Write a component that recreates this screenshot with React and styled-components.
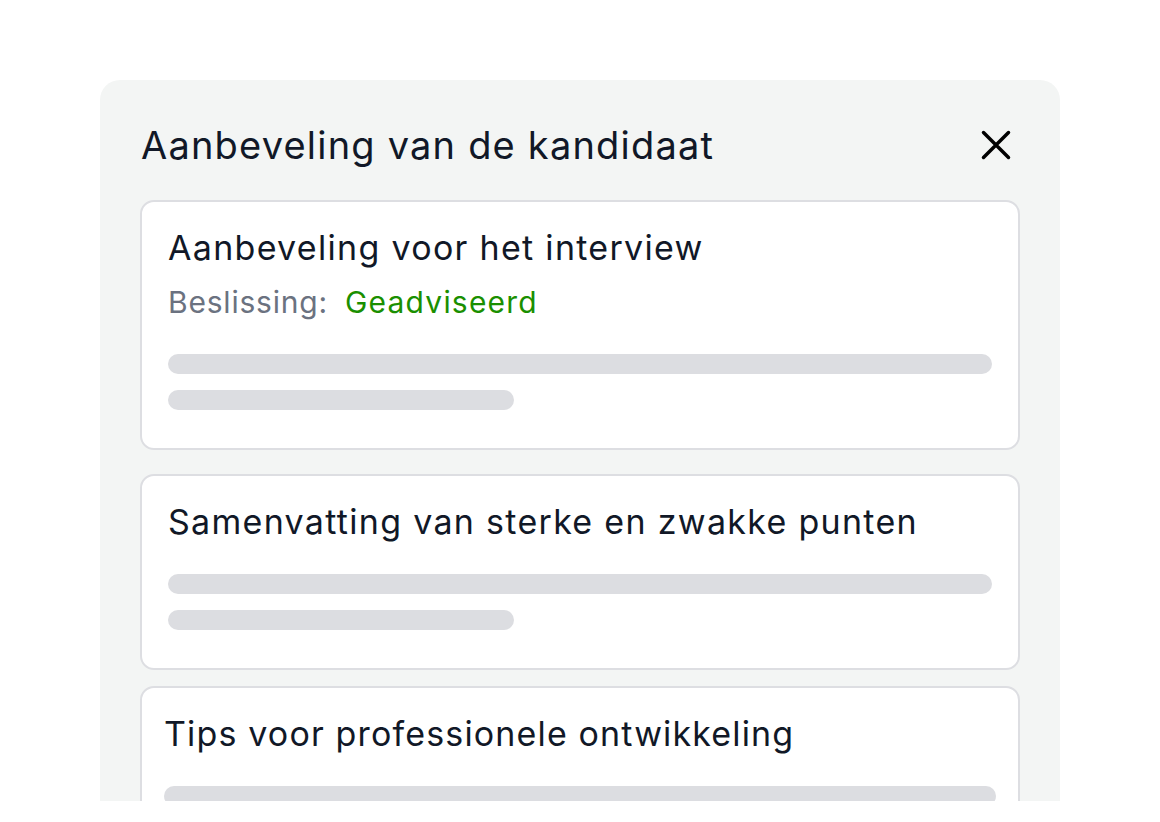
import styled, { createGlobalStyle } from "styled-components";

const GlobalStyle = createGlobalStyle`
  html, body {
    margin: 0;
    padding: 0;
    background: #ffffff;
  }
  body {
    font-family: Inter, "Noto Sans", sans-serif;
    color: #111827;
  }
`;

const Page = styled.div`
  width: 1160px;
  height: 822px;
  padding: 80px 100px 0;
  box-sizing: border-box;
  overflow: hidden;
`;

const Panel = styled.div`
  width: 960px;
  height: 721px;
  background: #f3f5f4;
  border-radius: 20px 20px 0 0;
  overflow: hidden;
`;

const Header = styled.div`
  display: flex;
  align-items: center;
  justify-content: space-between;
  padding: 40px 40px 30px 41px;
`;

const Title = styled.h2`
  margin: 0;
  font-size: 38px;
  line-height: 50px;
  letter-spacing: 1.2px;
  font-weight: 400;
  color: #111827;
`;

const CloseButton = styled.button`
  border: 0;
  background: none;
  padding: 0;
  width: 32px;
  height: 32px;
  margin-right: 8px;
  display: flex;
  align-items: center;
  justify-content: center;
  cursor: pointer;
`;

const List = styled.div`
  display: flex;
  flex-direction: column;
  padding: 0 40px;
`;

const Card = styled.section`
  background: #ffffff;
  border: 2px solid #dddee2;
  border-radius: 14px;
  margin-top: ${(p) => p.$mt}px;
  padding: 26px ${(p) => p.$px}px 38px;
  display: flex;
  flex-direction: column;
`;

const CardTitle = styled.h3`
  margin: 0;
  font-size: 34px;
  line-height: 40px;
  letter-spacing: ${(p) => p.$ls}px;
  font-weight: 400;
  color: #111827;
`;

const Decision = styled.div`
  margin-top: 14px;
  font-size: 30px;
  line-height: 40px;
  letter-spacing: 0.8px;
  display: flex;
  gap: 17px;
`;

const Label = styled.span`
  color: #6b7280;
`;

const Value = styled.span`
  color: #1a8f00;
  letter-spacing: 1.2px;
`;

const Bars = styled.div`
  margin-top: 32px;
  display: flex;
  flex-direction: column;
  gap: 16px;
`;

const Bar = styled.div`
  height: 20px;
  border-radius: 10px;
  background: #dcdde1;
  width: ${(p) => p.$w};
`;

const cards = [
  { title: "Aanbeveling voor het interview", decision: "Geadviseerd", mt: 0, px: 26, ls: 1.3 },
  { title: "Samenvatting van sterke en zwakke punten", mt: 24, px: 26, ls: 1.3 },
  { title: "Tips voor professionele ontwikkeling", mt: 16, px: 22, ls: 1.15 },
];

const App = () => {
  return (
    <>
      <GlobalStyle />
      <Page>
        <Panel>
          <Header>
            <Title>Aanbeveling van de kandidaat</Title>
            <CloseButton aria-label="Sluiten">
              <svg width="32" height="32" viewBox="0 0 32 32" fill="none">
                <path
                  d="M3.5 3.5L28.5 28.5M28.5 3.5L3.5 28.5"
                  stroke="#000"
                  strokeWidth="3.5"
                  strokeLinecap="round"
                />
              </svg>
            </CloseButton>
          </Header>
          <List>
            {cards.map((card) => (
              <Card key={card.title} $mt={card.mt} $px={card.px}>
                <CardTitle $ls={card.ls}>{card.title}</CardTitle>
                {card.decision && (
                  <Decision>
                    <Label>Beslissing:</Label>
                    <Value>{card.decision}</Value>
                  </Decision>
                )}
                <Bars>
                  <Bar $w="100%" />
                  <Bar $w="42%" />
                </Bars>
              </Card>
            ))}
          </List>
        </Panel>
      </Page>
    </>
  );
};

export default App;
